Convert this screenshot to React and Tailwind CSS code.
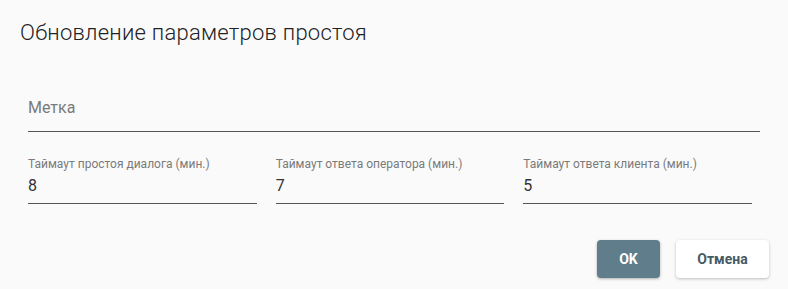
import React from 'react';

const Field = ({ label, value }) => (
  <div className="flex flex-col">
    <span className="text-[12px] leading-[14px] text-[#7a7a7a]">{label}</span>
    <span className="mt-[5px] text-[16px] leading-[19px] text-[#333]">{value}</span>
    <div className="mt-[8px] h-px bg-[#555]" />
  </div>
);

export default function App() {
  return (
    <div className="w-[788px] h-[289px] bg-[#fafafa] font-['Roboto',sans-serif]">
      <h2 className="pl-[20px] pt-[19px] text-[22px] leading-[28px] font-light tracking-[0.25px] text-[#222]">
        Обновление параметров простоя
      </h2>

      <div className="px-[28px] pt-[51px]">
        <div className="text-[16px] leading-[19px] text-[#7a7a7a]">Метка</div>
        <div className="mt-[14px] h-px bg-[#555]" />

        <div className="mt-[25px] grid w-[724px] grid-cols-3 gap-x-[19px]">
          <Field label="Таймаут простоя диалога (мин.)" value="8" />
          <Field label="Таймаут ответа оператора (мин.)" value="7" />
          <Field label="Таймаут ответа клиента (мин.)" value="5" />
        </div>
      </div>

      <div className="mt-[36px] flex justify-end gap-[16px] pr-[19px]">
        <button className="h-[38px] w-[63px] rounded-[4px] bg-[#607d8b] text-[14px] font-bold text-white shadow-[0_1px_3px_rgba(0,0,0,0.3)]">
          OK
        </button>
        <button className="h-[38px] w-[93px] rounded-[4px] bg-white text-[14px] font-bold text-[#455a64] shadow-[0_1px_3px_rgba(0,0,0,0.25)]">
          Отмена
        </button>
      </div>
    </div>
  );
}
